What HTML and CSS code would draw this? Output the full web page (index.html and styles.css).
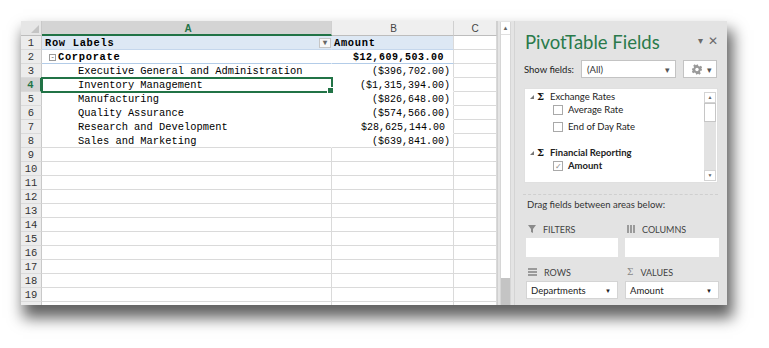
FILE: index.html
```html
<!DOCTYPE html>
<html lang="en">
  <head>
    <meta charset="UTF-8" />
    <meta name="viewport" content="width=device-width, initial-scale=1.0" />
    <title>PivotTable Fields</title>
    <link rel="stylesheet" href="styles.css">
  </head>
  <body>
    <div class="stage">
    <div class="window">
      <div class="sheet">
        <div class="row colhead">
          <div class="rh corner"><span class="corner-tri"></span></div>
          <div class="c a active">A</div>
          <div class="c b">B</div>
          <div class="c cc">C</div>
        </div>
        <div class="row pv hdr">
          <div class="rh">1</div>
          <div class="c a bold">Row Labels<span class="filter-btn">&#9662;</span></div>
          <div class="c b bold">Amount</div>
          <div class="c cc"></div>
        </div>
        <div class="row pv total">
          <div class="rh">2</div>
          <div class="c a bold"><span class="minus">-</span>Corporate</div>
          <div class="c b bold num">$12,609,503.00</div>
          <div class="c cc"></div>
        </div>
        <div class="row pv">
          <div class="rh">3</div>
          <div class="c a sub">Executive General and Administration</div>
          <div class="c b num">($396,702.00)</div>
          <div class="c cc"></div>
        </div>
        <div class="row pv">
          <div class="rh active-row">4</div>
          <div class="c a sub sel">Inventory Management</div>
          <div class="c b num">($1,315,394.00)</div>
          <div class="c cc"></div>
        </div>
        <div class="row pv">
          <div class="rh">5</div>
          <div class="c a sub">Manufacturing</div>
          <div class="c b num">($826,648.00)</div>
          <div class="c cc"></div>
        </div>
        <div class="row pv">
          <div class="rh">6</div>
          <div class="c a sub">Quality Assurance</div>
          <div class="c b num">($574,566.00)</div>
          <div class="c cc"></div>
        </div>
        <div class="row pv">
          <div class="rh">7</div>
          <div class="c a sub">Research and Development</div>
          <div class="c b num pos">$28,625,144.00</div>
          <div class="c cc"></div>
        </div>
        <div class="row pv last">
          <div class="rh">8</div>
          <div class="c a sub">Sales and Marketing</div>
          <div class="c b num">($639,841.00)</div>
          <div class="c cc"></div>
        </div>
        <div class="row"><div class="rh">9</div><div class="c a"></div><div class="c b"></div><div class="c cc"></div></div>
        <div class="row"><div class="rh">10</div><div class="c a"></div><div class="c b"></div><div class="c cc"></div></div>
        <div class="row"><div class="rh">11</div><div class="c a"></div><div class="c b"></div><div class="c cc"></div></div>
        <div class="row"><div class="rh">12</div><div class="c a"></div><div class="c b"></div><div class="c cc"></div></div>
        <div class="row"><div class="rh">13</div><div class="c a"></div><div class="c b"></div><div class="c cc"></div></div>
        <div class="row"><div class="rh">14</div><div class="c a"></div><div class="c b"></div><div class="c cc"></div></div>
        <div class="row"><div class="rh">15</div><div class="c a"></div><div class="c b"></div><div class="c cc"></div></div>
        <div class="row"><div class="rh">16</div><div class="c a"></div><div class="c b"></div><div class="c cc"></div></div>
        <div class="row"><div class="rh">17</div><div class="c a"></div><div class="c b"></div><div class="c cc"></div></div>
        <div class="row"><div class="rh">18</div><div class="c a"></div><div class="c b"></div><div class="c cc"></div></div>
        <div class="row"><div class="rh">19</div><div class="c a"></div><div class="c b"></div><div class="c cc"></div></div>
        <div class="row"><div class="rh"></div><div class="c a"></div><div class="c b"></div><div class="c cc"></div></div>
      </div>

      <div class="vscroll">
        <div class="track">
          <div class="arrow-up">&#9650;</div>
          <div class="track-fill"></div>
          <div class="track-end"></div>
        </div>
      </div>

      <div class="pane">
        <div class="pane-head">
          <div class="pane-title">PivotTable Fields</div>
          <div class="pane-tools"><span class="small-arrow">&#9662;</span><span class="close">&#10005;</span></div>
        </div>

        <div class="show-row">
          <span class="show-label">Show fields:</span>
          <div class="select">(All)<span class="caret">&#9662;</span></div>
          <div class="gear-btn">
            <svg width="11" height="11" viewBox="0 0 10 10">
              <path d="M4 0h2l.3 1.5 1.2.6 1.3-.9 1.4 1.4-.9 1.3.6 1.2L10 4v2l-1.5.3-.6 1.2.9 1.3-1.4 1.4-1.3-.9-1.2.6L6 10H4l-.3-1.5-1.2-.6-1.3.9-1.4-1.4.9-1.3-.6-1.2L0 6V4l1.5-.3.6-1.2-.9-1.3 1.4-1.4 1.3.9 1.2-.6z" fill="#9a9a9a"/>
              <circle cx="5" cy="5" r="1.7" fill="#fff"/>
            </svg>
            <span class="caret">&#9662;</span>
          </div>
        </div>

        <div class="field-list">
          <div class="fields">
            <div class="group"><span class="expand"></span><span class="sigma">&Sigma;</span>Exchange Rates</div>
            <div class="field"><span class="check"></span>Average Rate</div>
            <div class="field"><span class="check"></span>End of Day Rate</div>
            <div class="group gap"><span class="expand"></span><span class="sigma">&Sigma;</span><b>Financial Reporting</b></div>
            <div class="field"><span class="check on">&#10003;</span><b>Amount</b></div>
          </div>
          <div class="list-scroll">
            <div class="ls-btn">&#9650;</div>
            <div class="ls-thumb"></div>
            <div class="ls-track"></div>
            <div class="ls-btn">&#9660;</div>
          </div>
        </div>

        <div class="divider"></div>
        <div class="drag-note">Drag fields between areas below:</div>

        <div class="areas">
          <div class="area">
            <div class="area-label">
              <svg width="8" height="8" viewBox="0 0 8 8"><path d="M0 0h8L5 4v4L3 7V4z" fill="#8a8a8a"/></svg>
              FILTERS
            </div>
            <div class="area-box"></div>
          </div>
          <div class="area">
            <div class="area-label">
              <svg width="8" height="8" viewBox="0 0 8 8"><rect x="0" y="0" width="2" height="8" fill="#9a9a9a"/><rect x="3" y="0" width="2" height="8" fill="#9a9a9a"/><rect x="6" y="0" width="2" height="8" fill="#9a9a9a"/></svg>
              COLUMNS
            </div>
            <div class="area-box"></div>
          </div>
          <div class="area">
            <div class="area-label">
              <svg width="9" height="8" viewBox="0 0 9 8"><rect x="0" y="0" width="9" height="2" fill="#9a9a9a"/><rect x="0" y="3" width="9" height="2" fill="#9a9a9a"/><rect x="0" y="6" width="9" height="2" fill="#9a9a9a"/></svg>
              ROWS
            </div>
            <div class="area-drop">Departments<span class="drop-caret">&#9660;</span></div>
          </div>
          <div class="area">
            <div class="area-label"><span class="sigma-sm">&Sigma;</span>VALUES</div>
            <div class="area-drop">Amount<span class="drop-caret">&#9660;</span></div>
          </div>
        </div>
      </div>
    </div>
    </div>
  </body>
</html>
```

FILE: styles.css
```css
html,
body {
  margin: 0;
  background: #ffffff;
  font-family: "Liberation Mono", monospace;
}
.stage {
  padding: 21px 0 0 21px;
  height: 348px;
  box-sizing: border-box;
}
.window {
  display: flex;
  width: 706px;
  height: 284px;
  background: #ffffff;
  overflow: hidden;
  box-shadow: 4px 11px 14px 2px rgba(0, 0, 0, 0.62);
}

/* spreadsheet grid */
.sheet {
  width: 476px;
  flex: none;
  overflow: hidden;
}
.row {
  display: flex;
  height: 14px;
}
.rh {
  width: 21px;
  flex: none;
  box-sizing: border-box;
  padding-top: 1px;
  background: #ececec;
  border-right: 1px solid #c9c9c9;
  border-bottom: 1px solid #dadada;
  color: #333;
  font-size: 10.5px;
  line-height: 13px;
  text-align: center;
}
.rh.active-row {
  background: #d4d4d4;
  color: #217346;
  font-weight: bold;
  border-right: 2px solid #217346;
}
.c {
  box-sizing: border-box;
  flex: none;
  display: flex;
  align-items: center;
  padding-top: 2px;
  border-right: 1px solid #dadada;
  border-bottom: 1px solid #dadada;
  font-size: 10.4px;
  line-height: 11px;
  color: #000;
  white-space: nowrap;
}
.a {
  width: 290px;
  padding-left: 3px;
}
.b {
  width: 122px;
  padding-left: 2px;
}
.cc {
  width: 43px;
}

/* column headers */
.colhead {
  height: 15px;
}
.colhead .rh {
  border-bottom: 1px solid #bdbdbd;
}
.colhead .c {
  justify-content: center;
  padding-top: 1px;
  background: #efefef;
  border-right: 1px solid #d0d0d0;
  border-bottom: 1px solid #bdbdbd;
  color: #444;
  font-family: "Liberation Sans", sans-serif;
  font-size: 10px;
}
.colhead .c.active {
  background: #d4d4d4;
  color: #217346;
  font-weight: bold;
  border-bottom: 2px solid #217346;
}
.corner {
  position: relative;
  background: #e6e6e6;
}
.corner-tri {
  position: absolute;
  right: 2px;
  bottom: 2px;
  border-left: 8px solid transparent;
  border-bottom: 8px solid #c4c4c4;
}

/* pivot table rows */
.pv .a {
  border-right-color: transparent;
  border-bottom-color: transparent;
}
.pv .b {
  border-bottom-color: transparent;
}
.pv.hdr .a,
.pv.hdr .b {
  background: #dde8f4;
  border-bottom-color: #c5d7ec;
}
.pv.total .a,
.pv.total .b {
  border-bottom-color: #b3cce8;
}
.pv.last .a,
.pv.last .b {
  border-bottom-color: #dadada;
}
.bold {
  font-weight: bold;
  letter-spacing: 0.7px;
}
.sub {
  padding-left: 36px;
}
.num {
  justify-content: flex-end;
  padding-right: 3px;
  font-size: 10px;
}
.num.bold {
  letter-spacing: 0.5px;
  padding-right: 9px;
}
.num.pos {
  padding-right: 8px;
}
.filter-btn {
  margin-left: auto;
  margin-top: -2px;
  width: 12px;
  height: 10px;
  box-sizing: border-box;
  border: 1px solid #c6c6c6;
  background: #f7f7f7;
  color: #666;
  font-family: "Liberation Sans", sans-serif;
  font-size: 8px;
  line-height: 8px;
  text-align: center;
  letter-spacing: 0;
}
.minus {
  width: 7px;
  height: 7px;
  box-sizing: border-box;
  margin: -1px 2px 0 4px;
  border: 1px solid #9a9a9a;
  color: #555;
  font-size: 7px;
  line-height: 4px;
  text-align: center;
  letter-spacing: 0;
  font-weight: normal;
}
.sel {
  position: relative;
  outline: 2px solid #217346;
  outline-offset: -1px;
}
.sel::after {
  content: "";
  position: absolute;
  right: -3px;
  bottom: -3px;
  width: 5px;
  height: 5px;
  background: #217346;
  border: 1px solid #fff;
}

/* sheet scrollbar */
.vscroll {
  width: 17px;
  flex: none;
  box-sizing: border-box;
  padding: 1px 3px 0 2px;
  background: #e4e4e4;
  border-left: 1px solid #d0d0d0;
}
.track {
  display: flex;
  flex-direction: column;
  height: 100%;
  background: #ffffff;
  border-left: 1px solid #d6d6d6;
  border-right: 1px solid #d6d6d6;
}
.arrow-up {
  height: 12px;
  color: #666;
  font-family: "Liberation Sans", sans-serif;
  font-size: 6px;
  line-height: 12px;
  text-align: center;
  border-bottom: 1px solid #e0e0e0;
}
.track-fill {
  flex: 1;
}
.track-end {
  height: 27px;
  background: #c4c4c4;
}

/* pivot table fields pane */
.pane {
  width: 213px;
  flex: none;
  box-sizing: border-box;
  padding: 10px 9px 0 9px;
  background: #e3e3e3;
  border-left: 1px solid #d4d4d4;
  font-family: "Lato", "Liberation Sans", sans-serif;
  font-size: 9.5px;
  color: #333;
}
.pane-head {
  display: flex;
  align-items: center;
  height: 22px;
  padding-left: 1px;
}
.pane-title {
  color: #2a7a4b;
  font-size: 18.5px;
  font-weight: 400;
}
.pane-tools {
  display: flex;
  align-items: center;
  gap: 5px;
  margin-left: auto;
  margin-top: -4px;
  color: #6a6a6a;
}
.small-arrow {
  font-size: 10px;
}
.close {
  font-size: 12px;
}

.show-row {
  display: flex;
  align-items: center;
  height: 18px;
  margin-top: 7px;
}
.show-label {
  width: 57px;
  color: #222;
}
.select {
  display: flex;
  align-items: center;
  width: 95px;
  height: 18px;
  box-sizing: border-box;
  padding: 0 5px;
  background: #fff;
  border: 1px solid #c3c3c3;
}
.caret {
  margin-left: auto;
  color: #555;
  font-size: 9px;
}
.gear-btn {
  display: flex;
  align-items: center;
  gap: 5px;
  width: 34px;
  height: 18px;
  box-sizing: border-box;
  margin-left: 7px;
  padding: 0 4px 0 8px;
  background: #fff;
  border: 1px solid #c3c3c3;
}

.field-list {
  display: flex;
  height: 93px;
  margin-top: 10px;
  background: #fff;
  border: 1px solid #e0e0e0;
}
.fields {
  flex: 1;
  padding-top: 1px;
}
.group {
  display: flex;
  align-items: center;
  height: 13px;
  padding-left: 5px;
  color: #222;
}
.group.gap {
  margin-top: 13px;
}
.expand {
  width: 0;
  height: 0;
  margin-right: 3px;
  border-left: 4px solid transparent;
  border-bottom: 4px solid #777;
}
.sigma {
  width: 13px;
  font-family: "DejaVu Serif", serif;
  font-weight: bold;
  font-size: 10px;
  color: #111;
}
.field {
  display: flex;
  align-items: center;
  height: 13px;
  padding-left: 28px;
  color: #222;
}
.field + .field {
  margin-top: 4px;
}
.check {
  width: 10px;
  height: 10px;
  box-sizing: border-box;
  margin-right: 5px;
  background: #fff;
  border: 1px solid #a9a9a9;
  color: #8a8a8a;
  font-size: 8px;
  line-height: 8px;
  text-align: center;
}
.list-scroll {
  display: flex;
  flex-direction: column;
  width: 12px;
  margin: 3px 1px 1px 0;
  background: #e2e2e2;
}
.ls-btn {
  height: 9px;
  background: #fff;
  border: 1px solid #d4d4d4;
  color: #666;
  font-family: "Liberation Sans", sans-serif;
  font-size: 5px;
  line-height: 9px;
  text-align: center;
}
.ls-thumb {
  height: 17px;
  background: #fff;
  border: 1px solid #c6c6c6;
}
.ls-track {
  flex: 1;
}

.divider {
  margin: 11px 0 0 -1px;
  border-top: 1px dashed #cfcfcf;
}
.drag-note {
  height: 12px;
  margin-top: 4px;
  padding-left: 3px;
  line-height: 12px;
  color: #333;
}

.areas {
  display: grid;
  grid-template-columns: 92px 94px;
  column-gap: 7px;
  margin-top: 12px;
  padding-left: 2px;
}
.area-label {
  display: flex;
  align-items: center;
  gap: 7px;
  height: 12px;
  padding-left: 2px;
  color: #444;
  font-size: 9px;
}
.area-box {
  height: 19px;
  margin: 3px 0 9px;
  background: #fff;
}
.area-drop {
  display: flex;
  align-items: center;
  height: 18px;
  box-sizing: border-box;
  margin-top: 3px;
  padding: 0 6px 0 4px;
  background: #fff;
  border: 1px solid #d4d4d4;
  color: #222;
}
.drop-caret {
  margin-left: auto;
  font-size: 6px;
  color: #222;
}
.sigma-sm {
  font-family: "DejaVu Serif", serif;
  font-size: 9px;
  color: #888;
}
```
